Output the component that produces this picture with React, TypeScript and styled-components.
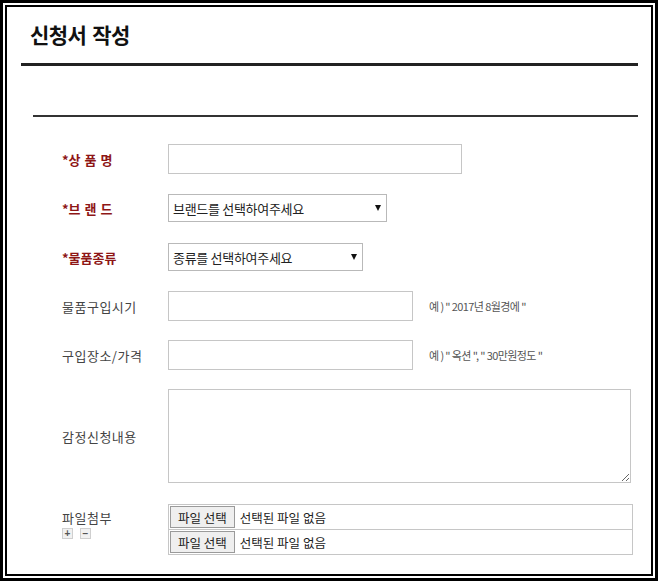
import React from 'react'
import styled, { createGlobalStyle } from 'styled-components'

const GlobalStyle = createGlobalStyle`
  html, body {
    margin: 0;
    padding: 0;
    background: #fff;
  }
  body {
    font-family: 'Noto Sans CJK KR', 'Noto Sans', sans-serif;
    color: #333;
  }
`

const Frame = styled.div`
  width: 658px;
  height: 581px;
  box-sizing: border-box;
  border: 3px solid #000;
  padding: 2px;
  background: #fff;
`

const Inner = styled.div`
  height: 100%;
  box-sizing: border-box;
  border: 2px solid #000;
  overflow: hidden;
`

const Header = styled.div`
  margin: 0 13px 0 14px;
  padding: 12px 0 14px 9px;
  border-bottom: 3px solid #222;
`

const Title = styled.h1`
  margin: 0;
  font-size: 21px;
  font-weight: 700;
  letter-spacing: -0.6px;
  word-spacing: 2px;
  color: #111;
  line-height: 30px;
`

const Form = styled.form`
  margin: 49px 13px 0 26px;
  padding: 27px 0 0 29px;
  border-top: 2px solid #333;
  display: flex;
  flex-direction: column;
  gap: 19px;
`

const Row = styled.div<{ $top?: boolean }>`
  display: flex;
  align-items: ${p => (p.$top ? 'flex-start' : 'center')};
  min-height: 30px;
  margin-top: ${p => (p.$top ? '2px' : '0')};
`

const Label = styled.div<{ $required?: boolean }>`
  width: 106px;
  flex-shrink: 0;
  font-size: 13px;
  letter-spacing: ${p => (p.$required ? '0' : '0.5px')};
  font-weight: ${p => (p.$required ? 700 : 400)};
  color: ${p => (p.$required ? '#8e1616' : '#444')};
  word-spacing: ${p => (p.$required ? '1px' : '0')};
`

const TextInput = styled.input<{ $w: number }>`
  width: ${p => p.$w}px;
  height: 30px;
  box-sizing: border-box;
  border: 1px solid #c6c6c6;
  padding: 0 6px;
  font: inherit;
  font-size: 13px;
  outline: none;
`

const SelectWrap = styled.div<{ $w: number }>`
  position: relative;
  width: ${p => p.$w}px;
  height: 28px;
`

const Select = styled.select`
  appearance: none;
  width: 100%;
  height: 100%;
  box-sizing: border-box;
  border: 1px solid #b9b9b9;
  background: #fff;
  padding: 0 0 0 4px;
  font-family: 'Noto Sans CJK KR', sans-serif;
  font-size: 13px;
  letter-spacing: -0.3px;
  color: #222;
  outline: none;
`

const Arrow = styled.span`
  position: absolute;
  right: 6px;
  top: 11px;
  width: 0;
  height: 0;
  border-left: 3px solid transparent;
  border-right: 3px solid transparent;
  border-top: 6px solid #111;
  pointer-events: none;
`

const Hint = styled.span`
  margin-left: 16px;
  font-size: 11px;
  letter-spacing: -0.6px;
  color: #555;
`

const TextArea = styled.textarea`
  width: 463px;
  height: 94px;
  box-sizing: border-box;
  border: 1px solid #c6c6c6;
  font: inherit;
  resize: both;
  outline: none;
`

const LabelBlock = styled.div`
  width: 106px;
  flex-shrink: 0;
  padding-top: 6px;
`

const PlainLabel = styled.div`
  font-size: 13px;
  letter-spacing: 0.5px;
  color: #444;
  line-height: 15px;
`

const MiniButtons = styled.div`
  display: flex;
  gap: 7px;
  margin-top: 3px;
`

const MiniButton = styled.button`
  width: 11px;
  height: 11px;
  box-sizing: border-box;
  padding: 0;
  border: 1px solid #cfcfcf;
  background: #f1f1f1;
  font-size: 10px;
  line-height: 8px;
  font-weight: 700;
  color: #555;
  font-family: 'Liberation Sans', sans-serif;
`

const FileList = styled.div`
  display: flex;
  flex-direction: column;
`

const FileBox = styled.div`
  width: 465px;
  height: 26px;
  box-sizing: border-box;
  border: 1px solid #c6c6c6;
  display: flex;
  align-items: center;
  padding-left: 1px;
  gap: 5px;
  & + & {
    margin-top: -1px;
  }
`

const FileButton = styled.button`
  height: 22px;
  box-sizing: border-box;
  padding: 0 7px;
  border: 1px solid #9a9a9a;
  background: #efefef;
  font-family: 'Noto Sans CJK KR', sans-serif;
  font-size: 12.5px;
  color: #222;
`

const FileName = styled.span`
  font-size: 12.5px;
  color: #222;
`

export default function App() {
  return (
    <>
      <GlobalStyle />
      <Frame>
        <Inner>
          <Header>
            <Title>신청서 작성</Title>
          </Header>
          <Form onSubmit={e => e.preventDefault()}>
            <Row>
              <Label $required>*상 품 명</Label>
              <TextInput $w={294} />
            </Row>
            <Row>
              <Label $required>*브 랜 드</Label>
              <SelectWrap $w={219}>
                <Select>
                  <option>브랜드를 선택하여주세요</option>
                </Select>
                <Arrow />
              </SelectWrap>
            </Row>
            <Row>
              <Label $required>*물품종류</Label>
              <SelectWrap $w={195}>
                <Select>
                  <option>종류를 선택하여주세요</option>
                </Select>
                <Arrow />
              </SelectWrap>
            </Row>
            <Row>
              <Label>물품구입시기</Label>
              <TextInput $w={245} />
              <Hint>예 ) " 2017년 8월경에 "</Hint>
            </Row>
            <Row>
              <Label>구입장소/가격</Label>
              <TextInput $w={245} />
              <Hint>예 ) " 옥션 ", " 30만원정도 "</Hint>
            </Row>
            <Row>
              <Label>감정신청내용</Label>
              <TextArea />
            </Row>
            <Row $top>
              <LabelBlock>
                <PlainLabel>파일첨부</PlainLabel>
                <MiniButtons>
                  <MiniButton type="button">+</MiniButton>
                  <MiniButton type="button">−</MiniButton>
                </MiniButtons>
              </LabelBlock>
              <FileList>
                {[0, 1].map(i => (
                  <FileBox key={i}>
                    <FileButton type="button">파일 선택</FileButton>
                    <FileName>선택된 파일 없음</FileName>
                  </FileBox>
                ))}
              </FileList>
            </Row>
          </Form>
        </Inner>
      </Frame>
    </>
  )
}
